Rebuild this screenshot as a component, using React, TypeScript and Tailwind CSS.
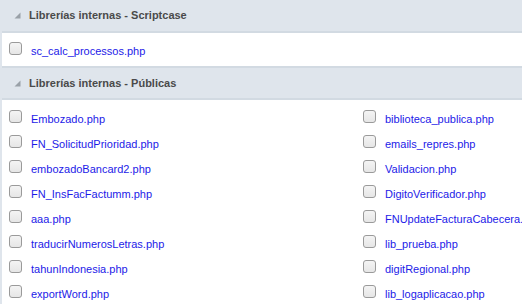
import React from "react"

const internalLibs = ["sc_calc_processos.php"]

const leftCol = [
  "Embozado.php",
  "FN_SolicitudPrioridad.php",
  "embozadoBancard2.php",
  "FN_InsFacFactumm.php",
  "aaa.php",
  "traducirNumerosLetras.php",
  "tahunIndonesia.php",
  "exportWord.php",
]

const rightCol = [
  "biblioteca_publica.php",
  "emails_repres.php",
  "Validacion.php",
  "DigitoVerificador.php",
  "FNUpdateFacturaCabecera.php",
  "lib_prueba.php",
  "digitRegional.php",
  "lib_logaplicacao.php",
]

function Triangle() {
  return (
    <svg width="7" height="7" viewBox="0 0 7 7" className="shrink-0">
      <polygon points="6.5,0.5 6.5,6.5 0.5,6.5" fill="#9aa1a8" />
    </svg>
  )
}

function Checkbox() {
  return (
    <div className="w-[13px] h-[13px] mt-[6px] shrink-0 rounded-[3px] border border-[#9a9a9a] bg-gradient-to-b from-[#f4f4f4] to-[#e6e6e6]" />
  )
}

function Header({ title, top }: { title: string; top?: boolean }) {
  return (
    <div
      className={`flex items-center gap-[8px] pl-[12px] bg-[#dfe5ec] border-b-2 border-[#d2dae2] ${
        top ? "h-[33px] pb-[1px]" : "h-[34px] border-t-2"
      }`}
    >
      <Triangle />
      <span className="text-[11px] font-bold text-[#4a4a4a]">{title}</span>
    </div>
  )
}

function FileItem({ name }: { name: string }) {
  return (
    <div className="flex items-start gap-[9px] h-[25px] whitespace-nowrap">
      <Checkbox />
      <span className="mt-[9px] text-[11px] leading-[13px] text-[#1d1ae8]">{name}</span>
    </div>
  )
}

export default function App() {
  return (
    <div className="w-[522px] h-[307px] overflow-hidden bg-white" style={{ fontFamily: '"Liberation Sans", Arial, sans-serif' }}>
      <div className="w-[720px] border-l-2 border-[#dfe5ec]">
        <Header title="Librerías internas - Scriptcase" top />
        <div className="h-[33px] pl-[7px] pt-[3px]">
          {internalLibs.map((n) => (
            <FileItem key={n} name={n} />
          ))}
        </div>
        <Header title="Librerías internas - Públicas" />
        <div className="grid grid-cols-[354px_354px] pl-[7px] pt-[4px]">
          <div className="flex flex-col">
            {leftCol.map((n) => (
              <FileItem key={n} name={n} />
            ))}
          </div>
          <div className="flex flex-col">
            {rightCol.map((n) => (
              <FileItem key={n} name={n} />
            ))}
          </div>
        </div>
      </div>
    </div>
  )
}
